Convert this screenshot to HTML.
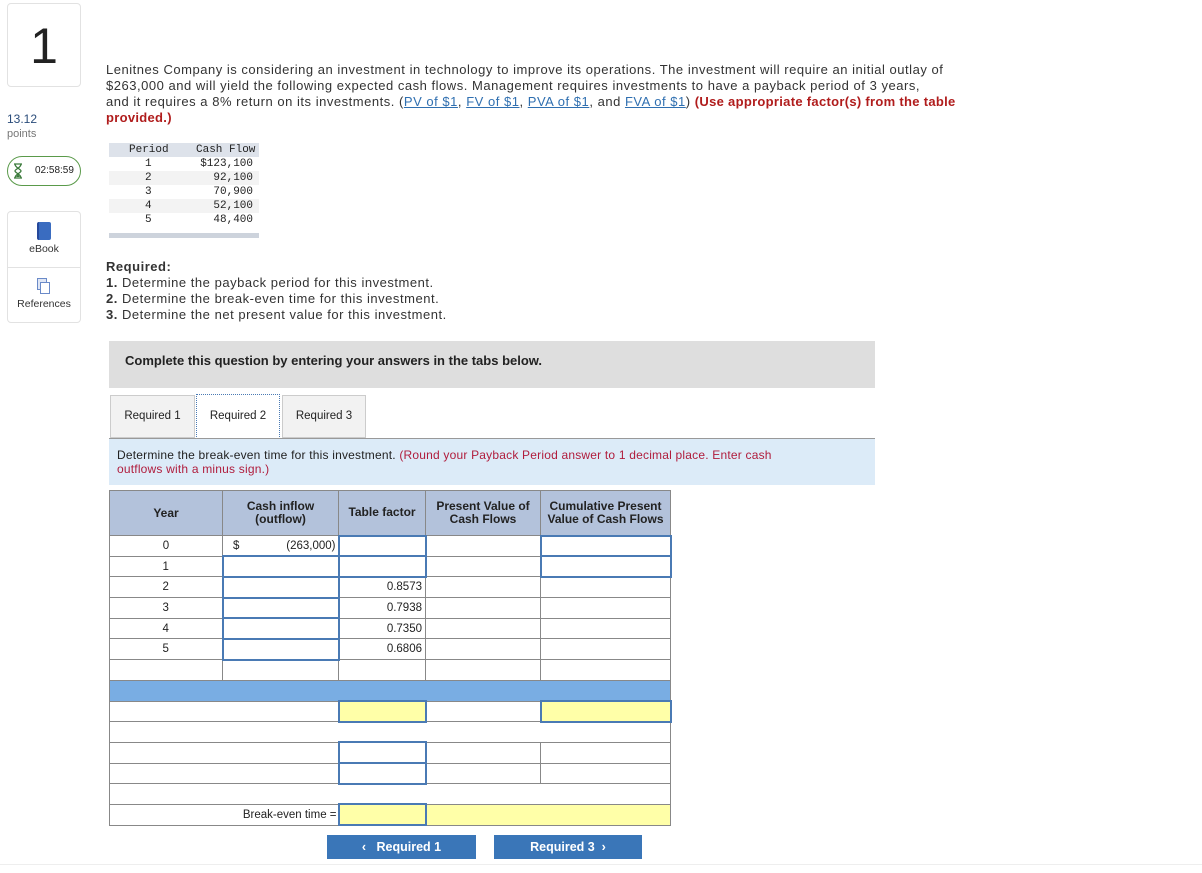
<!DOCTYPE html>
<html><head><meta charset="utf-8"><style>
*{box-sizing:border-box;margin:0;padding:0}
body{width:1202px;height:873px;background:#fff;font-family:"Liberation Sans",sans-serif;color:#222;position:relative;overflow:hidden}
.a{position:absolute}
.box{border:1px solid #e2e2e2;border-radius:4px;background:#fff}
.intro{left:106px;top:62px;width:870px;font-size:13px;line-height:16px;color:#333;letter-spacing:0.52px;white-space:nowrap}
.red{color:#b01c1c;font-weight:bold;letter-spacing:0.3px}
.lnk{color:#2f6fb0;text-decoration:underline}
.cf{left:109px;top:143px;width:150px;font-family:"Liberation Mono",monospace;font-size:11px;line-height:14px}
.cf div{height:14px;position:relative}
.cf span{position:absolute}
table{border-collapse:collapse;position:absolute;left:109px;top:490px;table-layout:fixed;font-size:11.5px}
td,th{border:1px solid #888;padding:0;height:20.7px}
th{background:#b3c2db;font-weight:bold;height:45px;font-size:12px;line-height:13px;color:#222}
.inp{border:2px solid #4a7ab4 !important}
.y{background:#ffffa8}
.c{text-align:center}.r{text-align:right;padding-right:3px}
.btn{background:#3a76b8;color:#fff;font-weight:bold;font-size:12.5px;text-align:center;line-height:24px;height:24px}
</style></head><body>
<div class="a box" style="left:7px;top:3px;width:74px;height:84px;font-size:50px;text-align:center;line-height:84px;color:#222">1</div>
<div class="a" style="left:7px;top:112px;font-size:12px;color:#2a4c7a">13.12</div>
<div class="a" style="left:7px;top:128px;font-size:11px;color:#777">points</div>
<div class="a" style="left:7px;top:156px;width:74px;height:30px;border:1px solid #5a9a4a;border-radius:15px;font-size:10px;line-height:28px;padding-left:27px;color:#222">02:58:59</div>
<svg class="a" style="left:13px;top:163px" width="10" height="16" viewBox="0 0 10 16"><path d="M1 1h8M1 15h8M2 1c0 4 6 5 6 7s-6 3-6 7M8 1c0 4-6 5-6 7s6 3 6 7" stroke="#3a7a3a" stroke-width="1.3" fill="none"/><path d="M3 14l2-3 2 3z" fill="#3a7a3a"/></svg>
<div class="a box" style="left:7px;top:211px;width:74px;height:112px"></div>
<div class="a" style="left:7px;top:267px;width:74px;border-top:1px solid #e2e2e2"></div>
<div class="a" style="left:37px;top:222px;width:14px;height:18px;background:#3a6cc0;border-radius:2px;border-left:2px solid #25489a"></div>
<div class="a" style="left:7px;top:243px;width:74px;text-align:center;font-size:10.5px;color:#333">eBook</div>
<div class="a" style="left:37px;top:278px;width:10px;height:12px;border:1px solid #6a8ac8;background:#dfe6f5"></div>
<div class="a" style="left:40px;top:282px;width:10px;height:12px;border:1px solid #6a8ac8;background:#fff"></div>
<div class="a" style="left:7px;top:298px;width:74px;text-align:center;font-size:10.5px;color:#333">References</div>

<div class="a intro">Lenitnes Company is considering an investment in technology to improve its operations. The investment will require an initial outlay of<br>$263,000 and will yield the following expected cash flows. Management requires investments to have a payback period of 3 years,<br>and it requires a 8% return on its investments. (<span class="lnk">PV of $1</span>, <span class="lnk">FV of $1</span>, <span class="lnk">PVA of $1</span>, and <span class="lnk">FVA of $1</span>) <span class="red">(Use appropriate factor(s) from the table<br>provided.)</span></div>

<div class="a cf">
<div style="background:#dde2ea"><span style="left:20px">Period</span><span style="left:87px">Cash Flow</span></div>
<div><span style="left:36px">1</span><span style="right:6px">$123,100</span></div>
<div style="background:#f3f3f3"><span style="left:36px">2</span><span style="right:6px">92,100</span></div>
<div><span style="left:36px">3</span><span style="right:6px">70,900</span></div>
<div style="background:#f3f3f3"><span style="left:36px">4</span><span style="right:6px">52,100</span></div>
<div><span style="left:36px">5</span><span style="right:6px">48,400</span></div>
<div style="height:6px"></div>
<div style="height:5px;background:#cdd3dc"></div>
</div>

<div class="a" style="left:106px;top:259px;font-size:13px;line-height:16px;color:#333;letter-spacing:0.52px"><b>Required:</b><br><b>1.</b> Determine the payback period for this investment.<br><b>2.</b> Determine the break-even time for this investment.<br><b>3.</b> Determine the net present value for this investment.</div>

<div class="a" style="left:109px;top:341px;width:766px;height:47px;background:#dedede;font-weight:bold;font-size:13px;line-height:38px;padding-left:16px;padding-top:1px">Complete this question by entering your answers in the tabs below.</div>

<div class="a" style="left:110px;top:395px;width:85px;height:43px;background:#f2f2f2;border:1px solid #ccc;font-size:11.5px;line-height:41px;text-align:center">Required 1</div>
<div class="a" style="left:196px;top:394px;width:84px;height:45px;background:#fff;border:1px dotted #4a7ab4;border-bottom:none;font-size:11.5px;line-height:43px;text-align:center">Required 2</div>
<div class="a" style="left:282px;top:395px;width:84px;height:43px;background:#f2f2f2;border:1px solid #ccc;font-size:11.5px;line-height:41px;text-align:center">Required 3</div>
<div class="a" style="left:109px;top:438px;width:766px;height:47px;background:#dcebf8;border-top:1px solid #999;font-size:12px;line-height:14px;padding:9px 8px;white-space:nowrap;letter-spacing:0.2px">Determine the break-even time for this investment. <span style="color:#b01c3c">(Round your Payback Period answer to 1 decimal place. Enter cash<br>outflows with a minus sign.)</span></div>

<table>
<colgroup><col style="width:113px"><col style="width:116px"><col style="width:87px"><col style="width:115px"><col style="width:130px"></colgroup>
<tr><th>Year</th><th>Cash inflow<br>(outflow)</th><th>Table factor</th><th>Present Value of<br>Cash Flows</th><th>Cumulative Present<br>Value of Cash Flows</th></tr>
<tr><td class="c">0</td><td><span style="float:left;padding-left:10px">$</span><span style="float:right;padding-right:2px">(263,000)</span></td><td class="inp"></td><td></td><td class="inp"></td></tr>
<tr><td class="c">1</td><td class="inp"></td><td class="inp"></td><td></td><td class="inp"></td></tr>
<tr><td class="c">2</td><td class="inp"></td><td class="r">0.8573</td><td></td><td></td></tr>
<tr><td class="c">3</td><td class="inp"></td><td class="r">0.7938</td><td></td><td></td></tr>
<tr><td class="c">4</td><td class="inp"></td><td class="r">0.7350</td><td></td><td></td></tr>
<tr><td class="c">5</td><td class="inp"></td><td class="r">0.6806</td><td></td><td></td></tr>
<tr><td></td><td></td><td></td><td></td><td></td></tr>
<tr><td colspan="5" style="background:#79ade3"></td></tr>
<tr><td colspan="2"></td><td class="inp y"></td><td></td><td class="inp y"></td></tr>
<tr><td colspan="5"></td></tr>
<tr><td colspan="2"></td><td class="inp"></td><td></td><td></td></tr>
<tr><td colspan="2"></td><td class="inp"></td><td></td><td></td></tr>
<tr><td colspan="5"></td></tr>
<tr><td colspan="2" class="r" style="padding-right:1px">Break-even time =</td><td class="inp y"></td><td colspan="2" class="y"></td></tr>
</table>

<div class="a btn" style="left:327px;top:835px;width:149px">&#8249;&nbsp;&nbsp; Required 1</div>
<div class="a btn" style="left:494px;top:835px;width:148px">Required 3 &nbsp;&#8250;</div>
<div class="a" style="left:0;top:864px;width:1202px;border-top:1px solid #eee"></div>
</body></html>
